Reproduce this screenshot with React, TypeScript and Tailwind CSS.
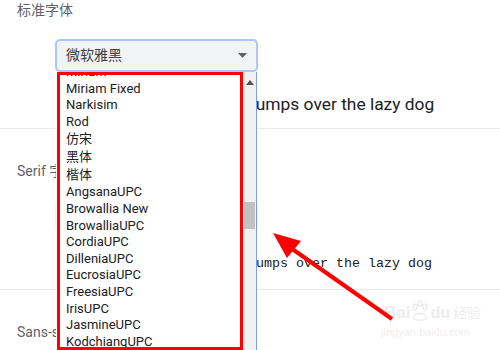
import React from "react";

const fonts: { name: string; cjk?: boolean }[] = [
    { name: "Miriam" },
    { name: "Miriam Fixed" },
    { name: "Narkisim" },
    { name: "Rod" },
    { name: "仿宋", cjk: true },
    { name: "黑体", cjk: true },
    { name: "楷体", cjk: true },
    { name: "AngsanaUPC" },
    { name: "Browallia New" },
    { name: "BrowalliaUPC" },
    { name: "CordiaUPC" },
    { name: "DilleniaUPC" },
    { name: "EucrosiaUPC" },
    { name: "FreesiaUPC" },
    { name: "IrisUPC" },
    { name: "JasmineUPC" },
    { name: "KodchiangUPC" },
    { name: "LilyUPC" },
];

const SAMPLE = "The quick brown fox jumps over the lazy dog";

function SectionTitle({ children }: { children: React.ReactNode }) {
    return <div className="pl-[17px] h-[20px] leading-[20px] text-[14px] text-[#5f6368]">{children}</div>;
}

function FontList() {
    return (
        <div className="absolute left-[56px] top-[72px] w-[201px] h-[278px] bg-white border-r border-[#7b9ddb] flex overflow-hidden">
            <div className="flex-1 overflow-hidden">
                <div className="-mt-[8px] flex flex-col">
                    {fonts.map((f) => (
                        <div
                            key={f.name}
                            className={
                                f.cjk
                                    ? "h-[18px] leading-[18px] pl-[10px] text-[13px] text-[#202124] whitespace-nowrap"
                                    : "h-[16.6px] leading-[16.6px] pl-[10px] text-[13px] text-[#202124] whitespace-nowrap"
                            }
                        >
                            {f.name}
                        </div>
                    ))}
                </div>
            </div>
            {/* scrollbar */}
            <div className="w-[13px] bg-[#f1f1f1] flex flex-col items-center">
                <svg width="8" height="5" viewBox="0 0 8 5" className="mt-[8px]">
                    <path d="M4 0 L8 5 L0 5 Z" fill="#505050" />
                </svg>
                <div className="mt-[117px] w-[11px] h-[27px] bg-[#c1c1c1]" />
            </div>
        </div>
    );
}

function Annotation() {
    return (
        <>
            <div className="absolute left-[57px] top-[72px] w-[186px] h-[278px] border-[3px] border-[#ff0000]" />
            <svg className="absolute left-0 top-0" width="500" height="350" viewBox="0 0 500 350">
                <line x1="392" y1="319" x2="288" y2="246" stroke="#ff0000" strokeWidth="4" />
                <path d="M273 233 L301 241 L287 258 Z" fill="#ff0000" />
            </svg>
        </>
    );
}

function Watermark() {
    return (
        <div className="absolute left-[384px] top-[298px] flex flex-col items-start text-[#ededed] select-none">
            <div className="flex items-end h-[24px]">
                <span className="text-[17px] font-bold leading-[18px] font-['Liberation_Sans',sans-serif]">Bai</span>
                <svg width="18" height="22" viewBox="0 0 22 26" className="mx-[1px]">
                    <g fill="none" stroke="#e8e8e8" strokeWidth="1.5">
                        <ellipse cx="5" cy="8" rx="2.5" ry="3.5" />
                        <ellipse cx="11" cy="4" rx="2.5" ry="3.5" />
                        <ellipse cx="17" cy="8" rx="2.5" ry="3.5" />
                        <path d="M3 22 C3 14 19 14 19 22 C19 25 3 25 3 22 Z" />
                    </g>
                </svg>
                <span className="text-[16px] font-bold leading-[18px] font-['Liberation_Sans',sans-serif]">du</span>
                <span className="ml-[3px] text-[14px] leading-[18px]">经验</span>
            </div>
            <div className="mt-[4px] -ml-[3px] text-[11px] leading-[12px] font-['Liberation_Sans',sans-serif] text-[#efefef]">jingyan.baidu.com</div>
        </div>
    );
}

export default function App() {
    return (
        <div className="relative w-[500px] h-[350px] overflow-hidden bg-white font-['Roboto','Noto_Sans_CJK_SC',sans-serif]">
            <section className="h-[129px] border-b border-[#e8eaed]">
                <SectionTitle>标准字体</SectionTitle>
                <div className="ml-[55px] mt-[19px] w-[203px] h-[33px] rounded-[5px] border-2 border-[#a8c7fa] bg-[#f1f3f4] flex items-center justify-between pl-[9px] pr-[9px]">
                    <span className="text-[14px] text-[#3c4043]">微软雅黑</span>
                    <svg width="9" height="5" viewBox="0 0 9 5">
                        <path d="M0 0 L9 0 L4.5 5 Z" fill="#5f6368" />
                    </svg>
                </div>
                <div className="mt-[22px] pl-[91px] h-[20px] leading-[20px] text-[17.4px] text-[#202124] whitespace-nowrap">{SAMPLE}</div>
            </section>

            <section className="h-[161px] border-b border-[#e8eaed] pt-[32px]">
                <SectionTitle>Serif 字体</SectionTitle>
                <div className="ml-[55px] mt-[18px] w-[203px] h-[33px] rounded-[5px] bg-[#f1f3f4]" />
                <div className="mt-[22px] pl-[88px] h-[20px] leading-[20px] text-[13.33px] text-[#202124] whitespace-nowrap font-['Liberation_Mono',monospace]">
                    {SAMPLE}
                </div>
            </section>

            <section className="pt-[32px]">
                <SectionTitle>Sans-serif 字体</SectionTitle>
            </section>

            <FontList />
            <Watermark />
            <Annotation />
        </div>
    );
}
